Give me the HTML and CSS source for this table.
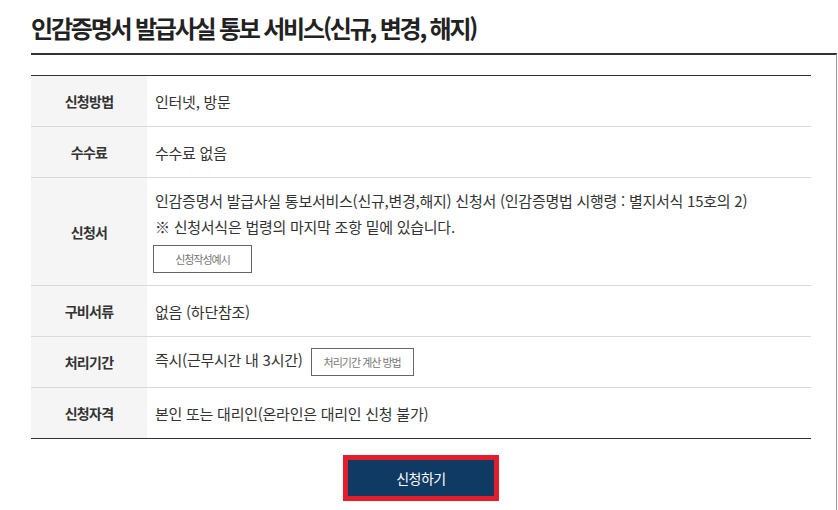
FILE: index.html
```html
<!DOCTYPE html>
<html lang="ko">
<head>
<meta charset="utf-8">
<title>인감증명서 발급사실 통보 서비스</title>
<link rel="stylesheet" href="styles.css">
</head>
<body>
<div class="page">
  <h1 class="title">인감증명서 발급사실 통보 서비스(신규, 변경, 해지)</h1>
  <div class="box">
    <table class="info">
      <tbody>
        <tr class="row">
          <th class="label">신청방법</th>
          <td class="value">인터넷, 방문</td>
        </tr>
        <tr class="row">
          <th class="label">수수료</th>
          <td class="value">수수료 없음</td>
        </tr>
        <tr class="row row-tall">
          <th class="label">신청서</th>
          <td class="value value-multi">
            <p class="line">인감증명서 발급사실 통보서비스(신규,변경,해지) 신청서 (인감증명법 시행령 : 별지서식 15호의 2)</p>
            <p class="line">※ 신청서식은 법령의 마지막 조항 밑에 있습니다.</p>
            <button class="sub-btn sub-btn-block" type="button">신청작성예시</button>
          </td>
        </tr>
        <tr class="row">
          <th class="label">구비서류</th>
          <td class="value">없음 (하단참조)</td>
        </tr>
        <tr class="row">
          <th class="label">처리기간</th>
          <td class="value">즉시(근무시간 내 3시간)<button class="sub-btn sub-btn-inline" type="button">처리기간 계산 방법</button></td>
        </tr>
        <tr class="row row-last">
          <th class="label">신청자격</th>
          <td class="value">본인 또는 대리인(온라인은 대리인 신청 불가)</td>
        </tr>
      </tbody>
    </table>
    <div class="actions">
      <button class="apply-btn" type="button">신청하기</button>
    </div>
  </div>
</div>
</body>
</html>
```

FILE: styles.css
```css
html, body {
  margin: 0;
  padding: 0;
  background: #fff;
  overflow: hidden;
}

body {
  font-family: "Noto Sans CJK KR", "Noto Sans", sans-serif;
  color: #333;
}

.page {
  padding-left: 31px;
}

.title {
  margin: 0 0 10px 0;
  padding-top: 13px;
  font-size: 24px;
  line-height: 30px;
  font-weight: 700;
  letter-spacing: -2.2px;
  color: #222;
}

.box {
  width: 780px;
  height: 435px;
  border-top: 2px solid #333;
  border-right: 1px solid #999;
  padding: 20px 25px 0 0;
}

.info {
  width: 780px;
  border-collapse: collapse;
  border-top: 1px solid #333;
}

.row > .label,
.row > .value {
  height: 50px;
  padding: 0;
  border-bottom: 1px solid #d9d9d9;
  vertical-align: middle;
}

.row-last > .label,
.row-last > .value {
  border-bottom: 1px solid #333;
}

.label {
  width: 116px;
  background: #f5f5f5;
  font-size: 14px;
  font-weight: 700;
  letter-spacing: -0.7px;
  color: #333;
  text-align: center;
}

.value {
  padding-left: 8px !important;
  font-size: 15px;
  letter-spacing: -0.25px;
  color: #333;
  text-align: left;
}

.row-tall > .label,
.row-tall > .value {
  height: 107px;
}

.value-multi {
  padding-top: 10px !important;
  padding-bottom: 12px !important;
  box-sizing: border-box;
}

.line {
  margin: 0;
  line-height: 26px;
}

.sub-btn {
  font-family: inherit;
  background: #fff;
  border: 1px solid #666;
  color: #777;
  font-size: 11px;
  letter-spacing: -1px;
  height: 28px;
  padding: 0 12px;
  cursor: pointer;
}

.sub-btn-block {
  display: block;
  min-width: 99px;
  margin-top: 5px;
  margin-left: -2px;
}

.sub-btn-inline {
  margin-left: 8px;
  vertical-align: middle;
}

.actions {
  display: flex;
  justify-content: center;
  width: 780px;
  margin-top: 16px;
}

.apply-btn {
  font-family: inherit;
  width: 156px;
  height: 46px;
  background: #0f3a63;
  border: 5px solid #e31e2a;
  color: #fff;
  font-size: 14px;
  letter-spacing: -0.5px;
  cursor: pointer;
}
```
